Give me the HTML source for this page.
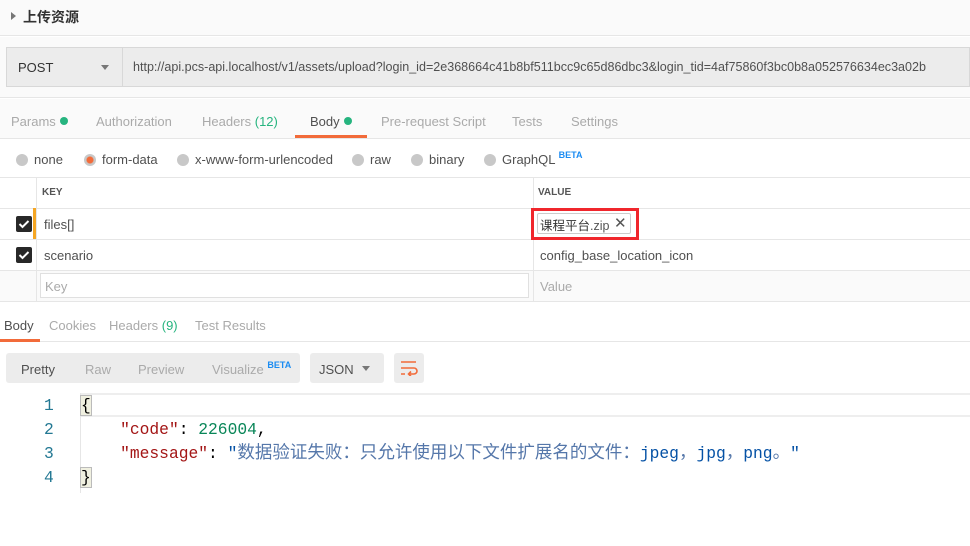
<!DOCTYPE html>
<html><head><meta charset="utf-8"><style>
*{margin:0;padding:0;box-sizing:border-box}
body{width:970px;height:546px;overflow:hidden;background:#fff;font-family:"Liberation Sans","Noto Sans CJK SC",sans-serif;font-size:13px;color:#505050;position:relative}
.a{position:absolute;white-space:nowrap}
.g{color:#aaa}
.dot{display:inline-block;width:8px;height:8px;border-radius:50%;background:#26b47f;margin-left:4px;vertical-align:1px}
.rad{display:inline-block;width:12px;height:12px;border-radius:50%;background:#c8c8c8;vertical-align:-2px;margin-right:6px}
.cb{position:absolute;left:16px;width:16px;height:16px;background:#282828;border-radius:2px}
.cb svg{position:absolute;left:2px;top:3px}
.mono{font-family:"Liberation Mono","Noto Sans CJK SC",monospace;font-size:16.3px}
.beta{color:#1b8cf2;font-size:9px;font-weight:bold;position:relative;top:-6px}
.cj{font-family:"Noto Sans CJK SC",sans-serif;font-size:17.5px;color:#5577aa;line-height:1}
</style></head><body>
<div class="a" style="left:0;top:0;width:970px;height:36px;background:#fafafa;border-bottom:1px solid #e6e6e6"></div>
<div class="a" style="left:11px;top:12px;width:0;height:0;border-left:5px solid #777;border-top:4px solid transparent;border-bottom:4px solid transparent"></div>
<div class="a" style="left:23px;top:7px;font-size:14px;color:#333;font-weight:bold">上传资源</div>
<div class="a" style="left:0;top:37px;width:970px;height:61px;background:#fafafa;border-bottom:1px solid #e6e6e6"></div>
<div class="a" style="left:6px;top:47px;width:964px;height:40px;background:#ececec;border:1px solid #d8d8d8"></div>
<div class="a" style="left:122px;top:47px;width:1px;height:40px;background:#d8d8d8"></div>
<div class="a" style="left:18px;top:60px;color:#333">POST</div>
<div class="a" style="left:101px;top:65px;border-top:5px solid #777;border-left:4px solid transparent;border-right:4px solid transparent"></div>
<div class="a" style="left:133px;top:60px;color:#505050;font-size:12.55px">http://api.pcs-api.localhost/v1/assets/upload?login_id=2e368664c41b8bf511bcc9c65d86dbc3&amp;login_tid=4af75860f3bc0b8a052576634ec3a02b</div>
<div class="a" style="left:0;top:99px;width:970px;height:40px;background:#fafafa;border-bottom:1px solid #e6e6e6"></div>
<div class="a g" style="left:11px;top:114px">Params<span class="dot"></span></div>
<div class="a g" style="left:96px;top:114px">Authorization</div>
<div class="a g" style="left:202px;top:114px">Headers <span style="color:#26b47f">(12)</span></div>
<div class="a" style="left:310px;top:114px;color:#505050">Body<span class="dot"></span></div>
<div class="a" style="left:295px;top:135px;width:72px;height:3px;background:#f26b3a"></div>
<div class="a g" style="left:381px;top:114px">Pre-request Script</div>
<div class="a g" style="left:512px;top:114px">Tests</div>
<div class="a g" style="left:571px;top:114px">Settings</div>
<div class="a" style="left:16px;top:152px"><span class="rad"></span>none</div>
<div class="a" style="left:84px;top:152px"><span class="rad" style="background:radial-gradient(circle,#f26b3a 3px,#c8c8c8 4px)"></span>form-data</div>
<div class="a" style="left:177px;top:152px"><span class="rad"></span>x-www-form-urlencoded</div>
<div class="a" style="left:352px;top:152px"><span class="rad"></span>raw</div>
<div class="a" style="left:411px;top:152px"><span class="rad"></span>binary</div>
<div class="a" style="left:484px;top:152px"><span class="rad"></span>GraphQL <span class="beta">BETA</span></div>
<div class="a" style="left:0;top:177px;width:970px;height:1px;background:#e6e6e6"></div>
<div class="a" style="left:0;top:208px;width:970px;height:1px;background:#e6e6e6"></div>
<div class="a" style="left:0;top:239px;width:970px;height:1px;background:#e6e6e6"></div>
<div class="a" style="left:0;top:270px;width:970px;height:1px;background:#e6e6e6"></div>
<div class="a" style="left:0;top:271px;width:970px;height:31px;background:#fafafa;border-bottom:1px solid #e6e6e6"></div>
<div class="a" style="left:36px;top:177px;width:1px;height:124px;background:#e6e6e6"></div>
<div class="a" style="left:533px;top:177px;width:1px;height:124px;background:#e6e6e6"></div>
<div class="a" style="left:42px;top:187px;font-size:10px;font-weight:bold;color:#555">KEY</div>
<div class="a" style="left:538px;top:187px;font-size:10px;font-weight:bold;color:#555">VALUE</div>
<div class="a" style="left:33px;top:208px;width:3px;height:31px;background:#f5a623"></div>
<div class="cb" style="top:216px"><svg width="12" height="10"><path d="M1.5 5l3 3 6-6" stroke="#fff" stroke-width="2" fill="none"/></svg></div>
<div class="cb" style="top:247px"><svg width="12" height="10"><path d="M1.5 5l3 3 6-6" stroke="#fff" stroke-width="2" fill="none"/></svg></div>
<div class="a" style="left:44px;top:217px">files[]</div>
<div class="a" style="left:44px;top:248px">scenario</div>
<div class="a" style="left:40px;top:273px;width:489px;height:25px;background:#fff;border:1px solid #e0e0e0"></div>
<div class="a g" style="left:45px;top:279px">Key</div>
<div class="a g" style="left:540px;top:279px">Value</div>
<div class="a" style="left:531px;top:208px;width:108px;height:32px;border:3px solid #f0262c"></div>
<div class="a" style="left:537px;top:213px;width:94px;height:21px;border:1px solid #ccc;border-radius:2px"></div>
<div class="a" style="left:540px;top:215px;color:#333;font-size:12.5px">课程平台<span style="color:#555">.zip</span></div>
<div class="a" style="left:614px;top:214px;font-size:15px;color:#555">✕</div>
<div class="a" style="left:540px;top:248px">config_base_location_icon</div>
<div class="a" style="left:0;top:302px;width:970px;height:40px;border-bottom:1px solid #e6e6e6"></div>
<div class="a" style="left:4px;top:318px;color:#505050">Body</div>
<div class="a" style="left:0;top:339px;width:40px;height:3px;background:#f26b3a"></div>
<div class="a g" style="left:49px;top:318px">Cookies</div>
<div class="a g" style="left:109px;top:318px">Headers <span style="color:#26b47f">(9)</span></div>
<div class="a g" style="left:195px;top:318px">Test Results</div>
<div class="a" style="left:6px;top:353px;width:294px;height:30px;background:#ececec;border-radius:3px"></div>
<div class="a" style="left:21px;top:362px;color:#505050">Pretty</div>
<div class="a g" style="left:85px;top:362px">Raw</div>
<div class="a g" style="left:138px;top:362px">Preview</div>
<div class="a g" style="left:212px;top:362px">Visualize <span class="beta">BETA</span></div>
<div class="a" style="left:310px;top:353px;width:74px;height:30px;background:#ececec;border-radius:3px"></div>
<div class="a" style="left:319px;top:362px;color:#505050">JSON</div>
<div class="a" style="left:362px;top:366px;border-top:5px solid #777;border-left:4px solid transparent;border-right:4px solid transparent"></div>
<div class="a" style="left:394px;top:353px;width:30px;height:30px;background:#ececec;border-radius:3px"></div>
<svg class="a" style="left:400px;top:360px" width="18" height="16"><path d="M1 2h15M1 8h13a3 3 0 0 1 0 6h-5M11 11.5l-2.5 2.5 2.5 2.5M1 14h4" stroke="#f26b3a" stroke-width="1.6" fill="none"/></svg>
<div class="a" style="left:81px;top:393px;width:889px;height:24px;border-top:2px solid #eee;border-bottom:2px solid #eee"></div>
<div class="a" style="left:80px;top:393px;width:1px;height:100px;background:#e6e6e6"></div>
<div class="a mono" style="left:44px;top:394px;color:#237893;line-height:24px">1<br>2<br>3<br>4</div>
<div class="a mono" style="left:81px;top:394px;line-height:24px;color:#000">
<span style="background:#f0f0e0;outline:1px solid #bbb">{</span><br>
&nbsp;&nbsp;&nbsp;&nbsp;<span style="color:#a31515">"code"</span>: <span style="color:#098658">226004</span>,<br>
&nbsp;&nbsp;&nbsp;&nbsp;<span style="color:#a31515">"message"</span>: <span style="color:#0451a5">"<span class="cj">数据验证失败：只允许使用以下文件扩展名的文件：</span>jpeg<span class="cj">，</span>jpg<span class="cj">，</span>png<span class="cj">。</span>"</span><br>
<span style="background:#f0f0e0;outline:1px solid #bbb">}</span></div>
</body></html>
